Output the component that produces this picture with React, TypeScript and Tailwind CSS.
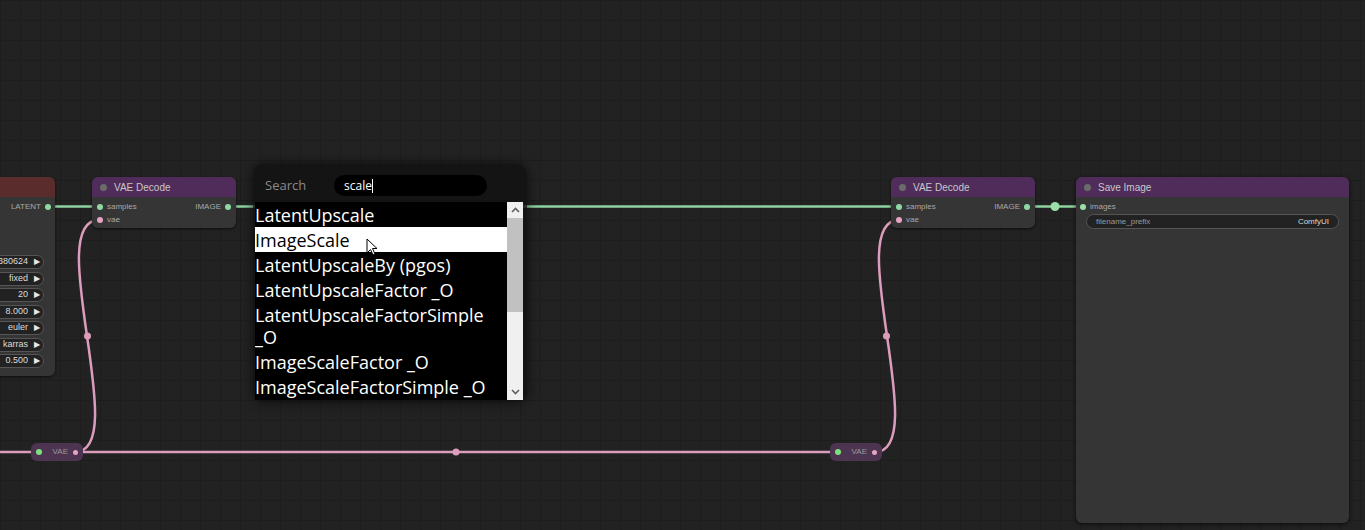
import React from "react";

const TITLE_PURPLE = "bg-[#4f2c59]";

function Dot({ color }: { color: string }) {
  return <span className={`inline-block w-[6px] h-[6px] rounded-full ${color}`} />;
}

function VaeDecode({ x }: { x: number }) {
  return (
    <div
      className="absolute top-[177px] w-[144px] h-[51px] rounded-[6px] bg-[#353535] shadow-[0_1px_3px_rgba(0,0,0,0.6)] overflow-hidden"
      style={{ left: x }}
    >
      <div className={`h-[20px] ${TITLE_PURPLE} flex items-center pl-[8px] gap-[7px]`}>
        <span className="w-[7px] h-[7px] rounded-full bg-[#6b6b6b]" />
        <span className="text-[10px] text-[#c8c8c8]">VAE Decode</span>
      </div>
      <div className="flex justify-between items-center h-[13px] mt-[3px] pl-[5px] pr-[5px]">
        <div className="flex items-center gap-[4px]">
          <Dot color="bg-[#8ed9a2]" />
          <span className="text-[8px] text-[#a8a8a8]">samples</span>
        </div>
        <div className="flex items-center gap-[4px]">
          <span className="text-[8px] text-[#a8a8a8]">IMAGE</span>
          <Dot color="bg-[#8ed9a2]" />
        </div>
      </div>
      <div className="flex items-center h-[13px] pl-[5px] gap-[4px]">
        <Dot color="bg-[#e6a3c2]" />
        <span className="text-[8px] text-[#a8a8a8]">vae</span>
      </div>
    </div>
  );
}

function Reroute({ x }: { x: number }) {
  return (
    <div
      className="absolute top-[443px] w-[52px] h-[18px] rounded-[6px] bg-[#4d3450] flex items-center justify-between px-[5px]"
      style={{ left: x }}
    >
      <span className="w-[6px] h-[6px] rounded-full bg-[#7ee07e]" />
      <div className="flex items-center gap-[5px]">
        <span className="text-[8px] text-[#9a9a9a]">VAE</span>
        <span className="w-[5px] h-[5px] rounded-full bg-[#e6a3c2]" />
      </div>
    </div>
  );
}

const widgets = ["380624", "fixed", "20", "8.000", "euler", "karras", "0.500"];

const items = [
  "LatentUpscale",
  "ImageScale",
  "LatentUpscaleBy (pgos)",
  "LatentUpscaleFactor _O",
  "LatentUpscaleFactorSimple _O",
  "ImageScaleFactor _O",
  "ImageScaleFactorSimple _O",
];

export default function App() {
  return (
    <div
      className="relative w-[1365px] h-[530px] overflow-hidden bg-[#222222] bg-[linear-gradient(#1d1d1d_1px,transparent_1px),linear-gradient(90deg,#1d1d1d_1px,transparent_1px)] bg-[size:20px_20px] font-['Liberation_Sans',Arial,sans-serif]"
    >
      {/* wires */}
      <svg className="absolute inset-0" width={1365} height={530}>
        <g stroke="#8fd3a0" strokeWidth={2.5} fill="none">
          <line x1={48} y1={206.5} x2={99} y2={206.5} />
          <line x1={229} y1={206.5} x2={899} y2={206.5} />
          <line x1={1028} y1={206.5} x2={1082} y2={206.5} />
        </g>
        <circle cx={473} cy={206.5} r={4} fill="#8fd3a0" />
        <circle cx={1055} cy={206.5} r={4.5} fill="#9be0a8" />
        <g stroke="#dc9cbb" strokeWidth={2.5} fill="none">
          <line x1={0} y1={452} x2={38} y2={452} />
          <line x1={75} y1={452} x2={836} y2={452} />
          <path d="M75 452 C133 452 41 220 99 220" />
          <path d="M875 452 C933 452 841 220 899 220" />
        </g>
        <circle cx={456} cy={452} r={3.5} fill="#dc9cbb" />
        <circle cx={87.5} cy={336} r={3.5} fill="#dc9cbb" />
        <circle cx={886.5} cy={336} r={3.5} fill="#dc9cbb" />
      </svg>

      {/* left KSampler node (cut off) */}
      <div className="absolute left-[-100px] top-[177px] w-[155px] h-[199px] rounded-[6px] bg-[#353535] shadow-[0_1px_3px_rgba(0,0,0,0.6)] overflow-hidden">
        <div className="h-[20px] bg-[#5a2c2c]" />
        <div className="flex justify-end items-center h-[13px] mt-[3px] pr-[4px] gap-[4px]">
          <span className="text-[8px] text-[#a8a8a8]">LATENT</span>
          <Dot color="bg-[#8ed9a2]" />
        </div>
        <div className="flex flex-col gap-[2.5px] mt-[42px] pr-[11px] items-end">
          {widgets.map((w) => (
            <div
              key={w}
              className="w-[140px] h-[14px] rounded-full bg-[#222] border border-[#555] flex items-center justify-end gap-[6px] pr-[3px]"
            >
              <span className="text-[9px] text-[#dcdcdc]">{w}</span>
              <span className="text-[8px] text-[#e8e8e8] leading-none">▶</span>
            </div>
          ))}
        </div>
      </div>

      <VaeDecode x={92} />
      <VaeDecode x={891} />

      <Reroute x={31} />
      <Reroute x={830} />

      {/* Save Image */}
      <div className="absolute left-[1076px] top-[177px] w-[273px] h-[346px] rounded-[6px] bg-[#353535] shadow-[0_1px_4px_rgba(0,0,0,0.7)] overflow-hidden">
        <div className={`h-[20px] ${TITLE_PURPLE} flex items-center pl-[8px] gap-[7px]`}>
          <span className="w-[7px] h-[7px] rounded-full bg-[#6b6b6b]" />
          <span className="text-[10px] text-[#c8c8c8]">Save Image</span>
        </div>
        <div className="flex items-center h-[13px] mt-[3px] pl-[4px] gap-[4px]">
          <Dot color="bg-[#9be0a8]" />
          <span className="text-[8px] text-[#a8a8a8]">images</span>
        </div>
        <div className="mx-[10px] mt-[1px] h-[15px] rounded-full bg-[#222] border border-[#555] flex items-center justify-between px-[9px]">
          <span className="text-[8px] text-[#9a9a9a]">filename_prefix</span>
          <span className="text-[8px] text-[#d8d8d8]">ComfyUI</span>
        </div>
      </div>

      {/* search box */}
      <div className="absolute left-[253px] top-[164px] w-[274px] h-[238px] rounded-[10px] bg-[rgba(17,17,17,0.82)] shadow-[0_0_12px_rgba(0,0,0,0.6)] flex flex-col">
        <div className="flex items-center h-[38px] pl-[12px] pt-[5px]">
          <span className="w-[69px] text-[13px] text-[#8a8a8a] font-['Open_Sans',sans-serif]">Search</span>
          <div className="w-[153px] h-[21px] rounded-full bg-black flex items-center pl-[10px]">
            <span className="text-[12px] text-white font-['Open_Sans',sans-serif]">scale</span>
            <span className="w-[1px] h-[14px] bg-white" />
          </div>
        </div>
        <div className="flex ml-[2px] h-[198px]">
          <div className="w-[252px] bg-black overflow-hidden font-['Open_Sans',sans-serif]">
            {items.map((it, i) => (
              <div
                key={it}
                className={`text-[18px] leading-[22px] py-[1.5px] ${
                  i === 1 ? "bg-white text-black" : "text-white"
                }`}
              >
                {it}
              </div>
            ))}
          </div>
          <div className="w-[16px] bg-[#f0f0f0] flex flex-col items-center">
            <div className="h-[16px] flex items-center justify-center">
              <svg width="9" height="6" viewBox="0 0 9 6">
                <path d="M1 5 L4.5 1.5 L8 5" stroke="#606060" strokeWidth="1.6" fill="none" />
              </svg>
            </div>
            <div className="w-[16px] h-[94px] bg-[#c1c1c1]" />
            <div className="flex-1" />
            <div className="h-[16px] flex items-center justify-center">
              <svg width="9" height="6" viewBox="0 0 9 6">
                <path d="M1 1 L4.5 4.5 L8 1" stroke="#606060" strokeWidth="1.6" fill="none" />
              </svg>
            </div>
          </div>
        </div>
      </div>

      {/* mouse cursor */}
      <svg className="absolute left-[366px] top-[238px]" width="12" height="19" viewBox="0 0 12 19">
        <path d="M1 1 L1 15 L4.5 11.5 L7 17 L9 16 L6.5 10.5 L11 10.5 Z" fill="#fff" stroke="#000" strokeWidth="1" />
      </svg>
    </div>
  );
}
